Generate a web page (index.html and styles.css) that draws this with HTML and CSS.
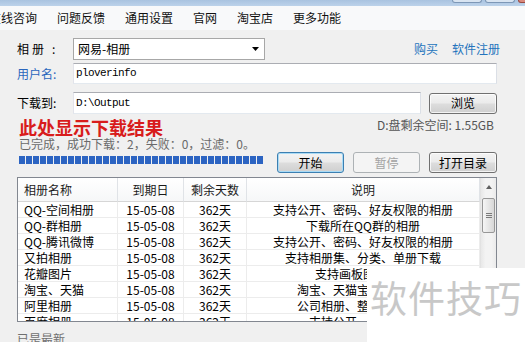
FILE: index.html
```html
<!DOCTYPE html>
<html lang="zh-CN">
<head>
<meta charset="utf-8">
<title>相册下载</title>
<link rel="stylesheet" href="styles.css">
</head>
<body>
<div class="titlebar"><span class="wbtn"></span><span class="wbtn"></span><span class="wbtn close"></span></div>
<nav class="menubar">
  <span class="mi first">在线咨询</span>
  <span class="mi">问题反馈</span>
  <span class="mi">通用设置</span>
  <span class="mi">官网</span>
  <span class="mi">淘宝店</span>
  <span class="mi">更多功能</span>
</nav>
<main class="form">
  <div class="row r1">
    <label class="lbl">相<i class="s1"></i>册<i class="s2"></i>:</label>
    <div class="select"><span>网易-相册</span><svg class="arrow" viewBox="0 0 7 4"><path d="M0 0h7L3.5 4z" fill="#000"/></svg></div>
    <div class="links"><a href="#">购买</a><a href="#">软件注册</a></div>
  </div>
  <div class="row r2">
    <label class="lbl blue">用户名:</label>
    <div class="input wide">ploverinfo</div>
  </div>
  <div class="row r3">
    <label class="lbl">下载到:</label>
    <div class="input path">D:\Output</div>
    <button class="btn browse">浏览</button>
  </div>
  <div class="status">
    <div class="status-left">
      <div class="result">此处显示下载结果</div>
      <div class="done">已完成，成功下载：2，失败：0，过滤：0。</div>
      <div class="progress"></div>
    </div>
    <div class="status-right">
      <div class="disk">D:盘剩余空间: 1.55GB</div>
      <div class="btns">
        <button class="btn default">开始</button>
        <button class="btn disabled">暂停</button>
        <button class="btn">打开目录</button>
      </div>
    </div>
  </div>
  <div class="table">
    <div class="grid">
      <div class="h c1">相册名称</div><div class="h">到期日</div><div class="h">剩余天数</div><div class="h">说明</div>
      <div class="c1">QQ-空间相册</div><div>15-05-08</div><div>362天</div><div>支持公开、密码、好友权限的相册</div>
      <div class="c1">QQ-群相册</div><div>15-05-08</div><div>362天</div><div>下载所在QQ群的相册</div>
      <div class="c1">QQ-腾讯微博</div><div>15-05-08</div><div>362天</div><div>支持公开、密码、好友权限的相册</div>
      <div class="c1">又拍相册</div><div>15-05-08</div><div>362天</div><div>支持相册集、分类、单册下载</div>
      <div class="c1">花瓣图片</div><div>15-05-08</div><div>362天</div><div>支持画板图片下载</div>
      <div class="c1">淘宝、天猫</div><div>15-05-08</div><div>362天</div><div>淘宝、天猫宝贝图片下载</div>
      <div class="c1">阿里相册</div><div>15-05-08</div><div>362天</div><div>公司相册、整店宝贝图片</div>
      <div class="c1">百度相册</div><div>15-05-08</div><div>362天</div><div>支持公开、密码相册</div>
    </div>
    <div class="scroll">
      <div class="sb-up"><svg width="6" height="4" viewBox="0 0 6 4"><path d="M0 4L3 0L6 4z" fill="#606060"/></svg></div>
      <div class="thumb"><span class="grip"></span></div>
    </div>
  </div>
  <div class="footer">已是最新</div>
</main>
<div class="watermark">软件技巧</div>
</body>
</html>
```

FILE: styles.css
```css
* { box-sizing: border-box; }
html, body { margin: 0; padding: 0; }
body {
  width: 525px;
  height: 342px;
  overflow: hidden;
  position: relative;
  background: #f0f0f0;
  font-family: "Noto Sans CJK SC", "Noto Sans", sans-serif;
  font-size: 12px;
  line-height: 1;
  color: #000;
}

.titlebar {
  height: 6px;
  background: linear-gradient(#a9c3e0, #bcd2ea);
  display: flex;
  justify-content: flex-end;
  align-items: flex-start;
  gap: 3px;
  overflow: hidden;
}
.wbtn {
  flex: none;
  width: 30px;
  height: 3px;
  border: 1px solid #7d97b6;
  border-top: 0;
  border-radius: 0 0 3px 3px;
  background: #d8e4f1;
}
.wbtn.close { background: #d98a7e; border-color: #9b4a40; margin-right: -23px; }

.menubar {
  height: 24px;
  background: #f8f9fa;
  display: flex;
  align-items: center;
  gap: 20px;
  overflow: hidden;
  white-space: nowrap;
}
.mi { flex: none; line-height: 14px; color: #111; }
.mi.first { margin-left: -11px; }

.form { padding: 8px 28px 0 17px; }
.row { display: flex; align-items: center; }
.r1 { height: 22px; }
.r2 { height: 21px; margin-top: 3px; }
.r3 { height: 22px; margin-top: 8px; }

.lbl { flex: none; width: 56px; line-height: 14px; white-space: nowrap; }
.lbl.blue { color: #2a66bd; }
.s1 { display: inline-block; width: 3px; }
.s2 { display: inline-block; width: 8px; }

.select {
  width: 192px;
  height: 22px;
  border: 1px solid #a7a7a7;
  background: #fff;
  display: flex;
  align-items: center;
  justify-content: space-between;
  padding: 0 5px 0 4px;
  line-height: 14px;
}
.arrow { width: 7px; height: 4px; display: block; }

.links { margin-left: auto; margin-right: -3px; display: flex; gap: 14px; line-height: 14px; }
.links a { color: #2474bd; text-decoration: none; }

.input {
  height: 100%;
  background: #fff;
  border: 1px solid;
  border-color: #abadb3 #dbdfe6 #e3e9ef #e2e3ea;
  padding-left: 2px;
  display: flex;
  align-items: center;
  font-family: "Liberation Mono", monospace;
  font-size: 11px;
  letter-spacing: -0.6px;
}
.input.wide { flex: 1; }
.input.path { width: 348px; }

.btn {
  font: inherit;
  font-size: 12px;
  line-height: 14px;
  height: 21px;
  width: 68px;
  padding: 0;
  color: #000;
  border: 1px solid #707070;
  border-radius: 3px;
  background: linear-gradient(#f3f3f3 0%, #ebebeb 48%, #dddddd 52%, #cfcfcf 100%);
  box-shadow: inset 0 0 0 1px rgba(255,255,255,0.75);
}
.btn.browse { margin-left: 8px; flex: none; }
.btn.default {
  border-color: #3c7fb1;
  box-shadow: inset 0 0 0 1px #a9dbf6;
}
.btn.disabled {
  border-color: #adb2b5;
  background: #f4f4f4;
  box-shadow: none;
  color: #a3a3a3;
}

.status { display: flex; justify-content: space-between; margin-top: 4px; }
.status-left { padding-left: 2px; width: 249px; }
.result {
  color: #d81c1c;
  font-weight: bold;
  font-size: 18px;
  line-height: 18px;
  height: 18px;
  white-space: nowrap;
}
.done { color: #6a6a6a; line-height: 16px; white-space: nowrap; }
.progress {
  margin-top: 4px;
  width: 245px;
  height: 8px;
  background: repeating-linear-gradient(90deg, #2c64c2 0 6px, transparent 6px 7px);
}
.status-right { width: 220px; }
.disk { text-align: right; color: #555; line-height: 14px; padding-right: 3px; white-space: nowrap; }
.btns { display: flex; gap: 9px; margin-top: 20px; }
.btns .btn { width: 67px; }
.btns .btn:last-child { width: 68px; }

.table {
  margin-top: 4px;
  height: 145px;
  border: 1px solid #828790;
  background: #fff;
  display: flex;
  overflow: hidden;
}
.grid {
  flex: none;
  width: 462px;
  display: grid;
  grid-template-columns: 100px 66px 63px 233px;
  grid-template-rows: 24px;
  grid-auto-rows: 16px;
  align-content: start;
}
.grid > div {
  border-right: 1px solid #ececec;
  border-bottom: 1px solid #ececec;
  display: flex;
  align-items: center;
  justify-content: center;
  white-space: nowrap;
  overflow: hidden;
  line-height: 14px;
}
.grid > .c1 { justify-content: flex-start; padding-left: 6px; }
.grid > .h {
  background: linear-gradient(#ffffff, #f6f7f8);
  border-right-color: #e0e3e7;
  border-bottom-color: #d6d6d6;
  color: #1a1a1a;
}

.scroll {
  flex: none;
  width: 16px;
  border-left: 1px solid #e2e2e2;
  background: linear-gradient(90deg, #e8e8e8, #f3f3f3 30%, #f3f3f3 70%, #ebebeb);
  display: flex;
  flex-direction: column;
  align-items: center;
}
.sb-up { height: 17px; display: flex; align-items: center; justify-content: center; }
.sb-up svg { display: block; }
.thumb {
  margin-top: 3px;
  width: 13px;
  height: 35px;
  border: 1px solid #979797;
  border-radius: 2px;
  background: linear-gradient(90deg, #f5f5f5, #e6e6e6 50%, #d7d7d7);
  display: flex;
  align-items: center;
  justify-content: center;
}
.grip {
  width: 6px;
  height: 5px;
  background: repeating-linear-gradient(#7a7a7a 0 1px, transparent 1px 2px);
}

.footer { margin-top: 10px; line-height: 14px; color: #6f6f6f; }

.watermark {
  position: absolute;
  left: 367px;
  top: 268px;
  right: 0;
  bottom: 0;
  background: #ffffff;
  color: #c8c8c8;
  font-size: 37px;
  line-height: 40px;
  padding: 9px 0 0 3px;
  letter-spacing: 1px;
  white-space: nowrap;
  overflow: hidden;
}
```
